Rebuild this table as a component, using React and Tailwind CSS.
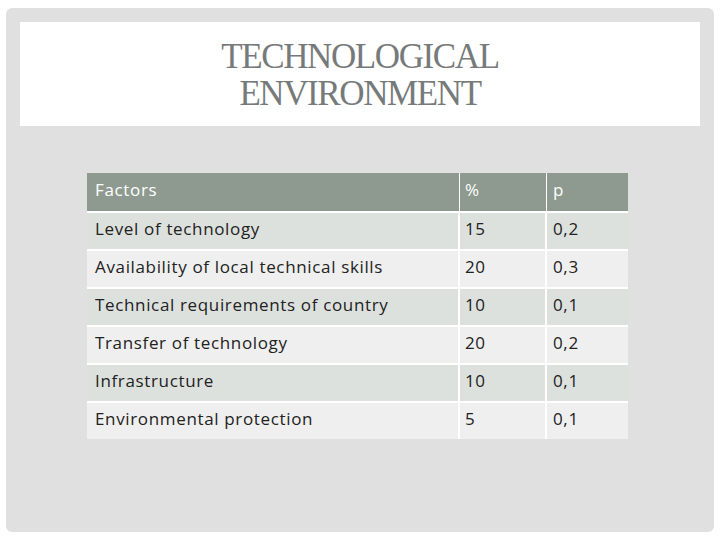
import React from 'react';

const rows = [
  { factor: 'Level of technology', pct: '15', p: '0,2' },
  { factor: 'Availability of local technical skills', pct: '20', p: '0,3' },
  { factor: 'Technical requirements of country', pct: '10', p: '0,1' },
  { factor: 'Transfer of technology', pct: '20', p: '0,2' },
  { factor: 'Infrastructure', pct: '10', p: '0,1' },
  { factor: 'Environmental protection', pct: '5', p: '0,1' },
];

export default function App() {
  return (
    <div className="w-[720px] h-[540px] bg-white pt-[8px] px-[6px] pb-[8px]">
      <div className="h-full rounded-[6px] bg-[#e0e0e0] pt-[14px] px-[14px]">
        <div className="h-[104px] bg-white flex flex-col items-center justify-center pt-[1px] text-[#767a7a] font-['Liberation_Serif',serif] text-[35px] leading-[37px] tracking-[-1.4px]">
          <div>TECHNOLOGICAL</div>
          <div>ENVIRONMENT</div>
        </div>
        <div className="mt-[47px] ml-[67px] w-[541px] font-['Open_Sans',sans-serif] text-[17px] tracking-[0.65px]">
          <div className="grid grid-cols-[373px_87px_81px] h-[38px] bg-[#8e9a90] text-white">
            <div className="flex items-center px-[8px] pb-[5px] border-r border-white">Factors</div>
            <div className="flex items-center px-[5px] pb-[5px] border-r border-white">%</div>
            <div className="flex items-center px-[6px] pb-[5px]">p</div>
          </div>
          {rows.map((r, i) => (
            <div
              key={r.factor}
              className={`grid grid-cols-[373px_87px_81px] h-[38px] border-t-2 border-white text-[#222222] ${i % 2 === 0 ? 'bg-[#dde1de]' : 'bg-[#efefef]'}`}
            >
              <div className="flex items-center px-[8px] pb-[5px] border-r-2 border-white">{r.factor}</div>
              <div className="flex items-center px-[5px] pb-[5px] border-r-2 border-white">{r.pct}</div>
              <div className="flex items-center px-[6px] pb-[5px]">{r.p}</div>
            </div>
          ))}
        </div>
      </div>
    </div>
  );
}
